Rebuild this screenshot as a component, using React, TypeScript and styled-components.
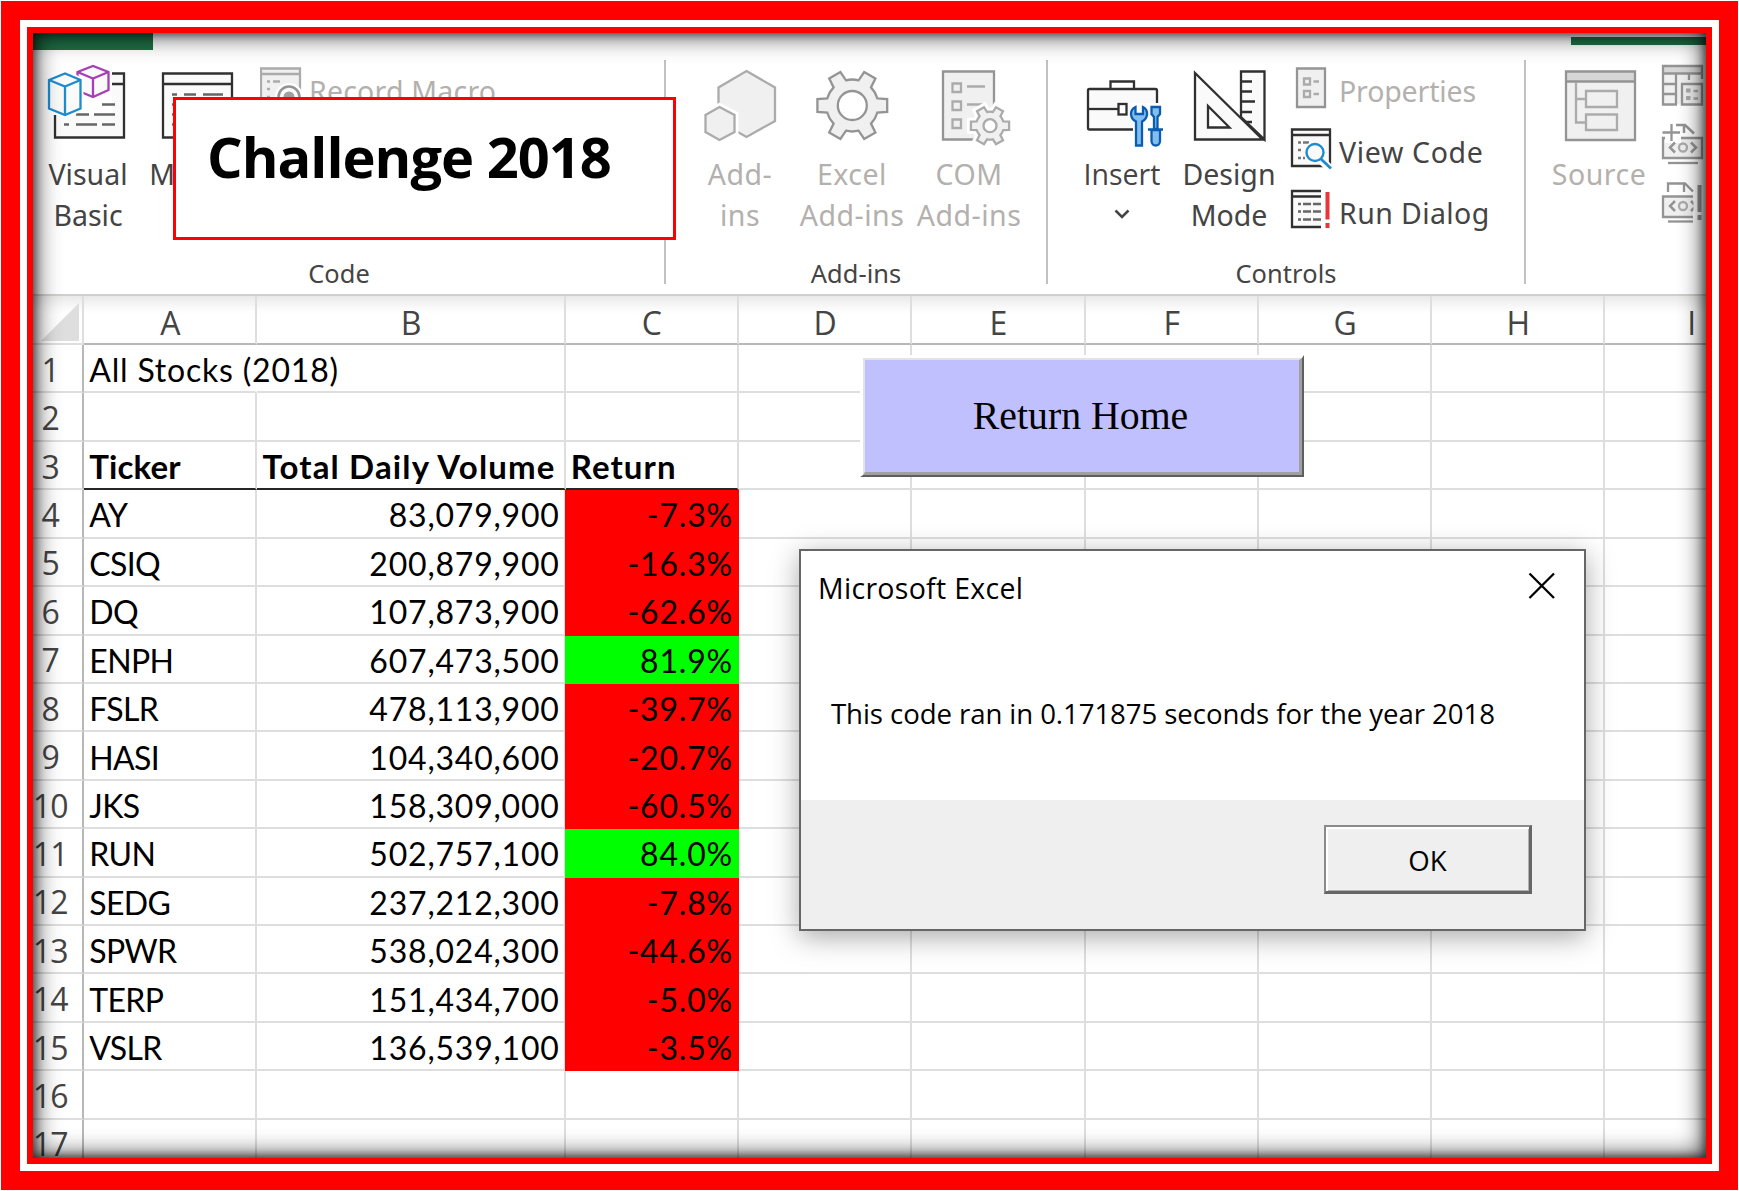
import React from "react";
import styled, { createGlobalStyle, css } from "styled-components";

const Global = createGlobalStyle`
  html, body { margin: 0; background: #fff; overflow: hidden; }
  * { box-sizing: border-box; }
`;

const UI = `"Noto Sans", "Open Sans", sans-serif`;
const OPEN = `"Open Sans", "Noto Sans", sans-serif`;
const CELL = `Lato, "Open Sans", sans-serif`;

/* ---------- picture frame ---------- */
const OuterFrame = styled.div`
  width: 1737px;
  height: 1189px;
  margin: 1px;
  border: 19px solid #ff0000;
  background: #fff;
  padding: 7px;
`;
const InnerFrame = styled.div`
  height: 100%;
  border: 6px solid #ff0000;
`;
const Canvas = styled.main`
  position: relative;
  height: 100%;
  overflow: hidden;
  background: #fff;
`;
const Vignette = styled.div`
  position: absolute;
  inset: 0;
  pointer-events: none;
  box-shadow: inset 0 0 25px 2px rgba(0, 0, 0, 0.78), inset 0 -2px 8px rgba(0, 0, 0, 0.25),
    inset 3px 0 8px rgba(0, 0, 0, 0.2), inset -3px 0 8px rgba(0, 0, 0, 0.25);
`;

/* ---------- ribbon ---------- */
const Ribbon = styled.header`
  position: relative;
  display: flex;
  height: 263px;
  padding-top: 27px;
  border-bottom: 2px solid #d0cfcd;
`;
const GreenStrip = styled.div<{ $left: number; $top: number; $w: number; $h: number }>`
  position: absolute;
  left: ${(p) => p.$left}px;
  top: ${(p) => p.$top}px;
  width: ${(p) => p.$w}px;
  height: ${(p) => p.$h}px;
  background: #1f6e43;
`;
const Group = styled.section<{ $w: number }>`
  width: ${(p) => p.$w}px;
  flex: none;
  display: flex;
  flex-direction: column;
`;
const GroupBody = styled.div<{ $pad: number }>`
  display: flex;
  height: 193px;
  padding-left: ${(p) => p.$pad}px;
`;
const GroupLabel = styled.div<{ $shift?: number }>`
  font: 25.4px/40px ${UI};
  letter-spacing: 0.1px;
  color: #444;
  text-align: center;
  padding-right: ${(p) => p.$shift || 0}px;
`;
const Separator = styled.div`
  width: 2px;
  height: 224px;
  flex: none;
  background: #c3c1be;
`;
const BigButton = styled.div<{ $w: number; $gap?: number; $off?: boolean; $face?: string }>`
  width: ${(p) => p.$w}px;
  margin-left: ${(p) => p.$gap || 0}px;
  flex: none;
  display: flex;
  flex-direction: column;
  align-items: center;
  font: 28.5px/41px ${(p) => p.$face || UI};
  letter-spacing: ${(p) => (p.$off ? 0.5 : 0)}px;
  color: ${(p) => (p.$off ? "#b3b0ad" : "#444")};
  white-space: nowrap;
  svg { display: block; margin-bottom: 4px; flex: none; }
`;
const SmallColumn = styled.div<{ $gap: number }>`
  display: flex;
  flex-direction: column;
  margin-left: ${(p) => p.$gap}px;
`;
const SmallRow = styled.div<{ $off?: boolean; $ls?: number; $face?: string }>`
  display: flex;
  align-items: center;
  height: 61px;
  gap: 5px;
  font: 28.5px/41px ${(p) => p.$face || UI};
  letter-spacing: ${(p) => p.$ls || 0}px;
  color: ${(p) => (p.$off ? "#b3b0ad" : "#444")};
  white-space: nowrap;
  svg { display: block; flex: none; }
  span { padding-top: 2px; }
`;

/* ---------- sheet ---------- */
const TRACKS = "51.3px 173.2px 308.2px repeat(7, 173.3px)";
const line = "#dedede";
const HeadRow = styled.div`
  display: grid;
  grid-template-columns: ${TRACKS};
  height: 49px;
  background: linear-gradient(#e9e9e9, #fafafa 12px, #fff 18px);
`;
const HeadCell = styled.div`
  display: flex;
  justify-content: center;
  align-items: center;
  padding: 7px 0 0 1px;
  border-right: 2px solid ${line};
  border-bottom: 2px solid #b8b8b8;
  font: 32px/36px ${OPEN};
  color: #444;
`;
const Corner = styled.div`
  border-right: 2px solid ${line};
  border-bottom: 2px solid ${line};
  display: flex;
  padding: 7px 0 0 8px;
  svg { display: block; }
`;
const Row = styled.div`
  display: grid;
  grid-template-columns: ${TRACKS};
  height: 48.43px;
`;
const RowHead = styled.div`
  display: flex;
  justify-content: center;
  align-items: center;
  padding: 3px 15px 0 0;
  border-right: 2px solid #b8b8b8;
  border-bottom: 2px solid ${line};
  font: 32px/40px ${OPEN};
  letter-spacing: -0.8px;
  color: #444;
`;
const Cell = styled.div<{
  $right?: boolean;
  $bold?: boolean;
  $fill?: string;
  $rule?: boolean;
  $open?: boolean;
  $ls?: number;
}>`
  display: flex;
  align-items: center;
  justify-content: ${(p) => (p.$right ? "flex-end" : "flex-start")};
  padding: 4px 4px 0 5px;
  border-right: 2px solid ${line};
  border-bottom: 2px solid ${line};
  font: 32px/40px ${CELL};
  letter-spacing: ${(p) => p.$ls ?? 0.8}px;
  color: #000;
  white-space: nowrap;
  ${(p) => p.$open && css`border-right-color: transparent;`}
  ${(p) => p.$rule && css`border-bottom-color: #262626;`}
  ${(p) => p.$bold && css`font-weight: 700; font-size: 33px; padding-top: 2px;`}
  ${(p) => p.$fill && css`
    background: ${p.$fill};
    border-color: ${p.$fill};
    margin-left: -1px;
  `}
`;

/* ---------- floating objects ---------- */
const TitleBox = styled.div`
  position: absolute;
  left: 140px;
  top: 64px;
  width: 503px;
  height: 143px;
  border: 3px solid #ff0000;
  background: #fff;
  padding: 18px 0 0 31px;
  font: 700 56px/76px ${OPEN};
  letter-spacing: -1px;
  color: #000;
  white-space: nowrap;
`;
const HomeButton = styled.div`
  position: absolute;
  left: 827px;
  top: 322px;
  width: 444px;
  height: 122px;
  border-style: solid;
  border-width: 3px 2px 2px 3px;
  border-color: #fff #5f5f5f #5f5f5f #fff;
`;
const HomeFace = styled.div`
  height: 100%;
  display: flex;
  align-items: center;
  justify-content: center;
  padding: 0 3px 0 0;
  border-style: solid;
  border-width: 2px 3px 3px 2px;
  border-color: #e3e3e3 #a0a0a0 #a0a0a0 #e3e3e3;
  background: #c0c0ff;
  font: 39.8px/44px "Liberation Serif", serif;
  color: #000;
`;
const Dialog = styled.div`
  position: absolute;
  left: 766px;
  top: 516px;
  width: 787px;
  height: 382px;
  display: flex;
  flex-direction: column;
  border: 2px solid #666;
  background: #fff;
  font-family: ${OPEN};
  color: #000;
  box-shadow: 0 6px 26px rgba(0, 0, 0, 0.34);
`;
const DialogTitle = styled.div`
  display: flex;
  justify-content: space-between;
  padding: 17px 28px 0 17px;
  font-size: 28.5px;
  line-height: 40px;
  letter-spacing: 0.3px;
  svg { display: block; margin-top: 4px; }
`;
const DialogText = styled.div`
  flex: 1;
  padding: 85px 0 0 30px;
  font-size: 27.6px;
  line-height: 40px;
  letter-spacing: -0.08px;
  white-space: nowrap;
`;
const DialogFooter = styled.div`
  height: 129px;
  display: flex;
  justify-content: flex-end;
  padding: 25px 52px 0 0;
  background: #efefef;
`;
const OkButton = styled.div`
  width: 208px;
  height: 69px;
  display: flex;
  align-items: center;
  justify-content: center;
  padding-top: 2px;
  border-style: solid;
  border-width: 2px 3px 3px 2px;
  border-color: #8a8a8a #666 #666 #8a8a8a;
  box-shadow: inset 2px 2px 0 #fff, inset -1px -1px 0 #b0b0b0;
  font-size: 27.6px;
  line-height: 40px;
`;

/* ---------- icons ---------- */
const DARK = "#303030";
const MID = "#949494";
const SOFT = "#ababab";

function gear(cx: number, cy: number, R: number, r: number, tip: number, base: number) {
  const pts: string[] = [];
  const at = (rad: number, deg: number) => {
    const a = (deg * Math.PI) / 180;
    return `${(cx + rad * Math.cos(a)).toFixed(1)} ${(cy + rad * Math.sin(a)).toFixed(1)}`;
  };
  for (let i = 0; i < 6; i++) {
    const a = i * 60;
    pts.push(`${i ? `A${r} ${r} 0 0 1 ` : "M"}${at(r, a - base)}`, `L${at(R, a - tip)}`, `L${at(R, a + tip)}`, `L${at(r, a + base)}`);
  }
  return pts.join(" ") + `A${r} ${r} 0 0 1 ${at(r, -base)}Z`;
}

const Icon = ({ x, w, y = 60, h = 90, children }: { x: number; w: number; y?: number; h?: number; children: React.ReactNode }) => (
  <svg width={w} height={h} viewBox={`${x} ${y} ${w} ${h}`} fill="none" strokeWidth={2.3}>
    {children}
  </svg>
);

const VisualBasicIcon = () => (
  <Icon x={44} w={88}>
    <path d="M55 115V137.500H124V73.500H112V115Z" fill="#fafafa" />
    <path d="M55 115V137.500H124V73.500H112M112 84H124" stroke={DARK} />
    <path d="M102 104.500H115M76 114.500H89M94 114.500H115M64 124.500H69M76 124.500H97M102 124.500H115" stroke="#666" />
    <path d="M77.500 72L93 66L108.500 72V90L93 97L81 92V80L77.500 76Z" fill="#fafafa" stroke="#a63fb5" />
    <path d="M77.500 72L93 78.500L108.500 72M93 78.500V97" stroke="#a63fb5" />
    <path d="M49 80L65 73.500L80.500 80V108.500L65 115L49 108.500Z" fill="#fafafa" stroke="#fff" strokeWidth={6} />
    <path d="M49 80L65 73.500L80.500 80V108.500L65 115L49 108.500Z" fill="#fafafa" stroke="#1e8bcd" />
    <path d="M49 80L65 86.500L80.500 80M65 86.500V115" stroke="#1e8bcd" />
  </Icon>
);
const MacrosIcon = () => (
  <Icon x={143} w={110}>
    <path d="M163 73.500H232V137.500H163Z" fill="#fafafa" stroke={DARK} />
    <path d="M163 84H232" stroke={DARK} />
    <path d="M172 94.500H177M184 94.500H196M203 94.500H223M172 104.500H177M172 114.500H177M172 124.500H177" stroke="#666" />
  </Icon>
);
const RecordIcon = () => (
  <Icon x={260} w={44} y={60} h={61}>
    <path d="M261 68.500H300V108H261Z" fill="#f0f0f0" stroke={SOFT} />
    <path d="M261 74H300" stroke={SOFT} />
    <path d="M267 81.500H270M273 81.500H280M267 89H270M267 97H270" stroke={SOFT} />
    <circle cx="289" cy="97" r="14" fill="#fff" />
    <circle cx="289" cy="97" r="10.500" stroke="#949494" strokeWidth={2.500} fill="#fafafa" />
    <circle cx="289" cy="97" r="5.500" fill="#a0a0a0" />
  </Icon>
);
const AddinsIcon = () => (
  <Icon x={700} w={80}>
    <path d="M746.500 71L775 87.500V121L746.500 137L718.500 121V87.500Z" fill="#f0f0f0" stroke={SOFT} />
    <path d="M719.500 107L734.500 115V132L719.500 140L705.500 132V115Z" fill="#fff" stroke="#fff" strokeWidth={8} />
    <path d="M719.500 107L734.500 115V132L719.500 140L705.500 132V115Z" fill="#f0f0f0" stroke={SOFT} />
  </Icon>
);
const ExcelAddinsIcon = () => (
  <Icon x={798} w={108}>
    <path d={gear(852.3, 105.5, 35.5, 26, 10.5, 16)} fill="#f0f0f0" stroke={MID} />
    <circle cx="852.300" cy="105.500" r="14.500" fill="#fff" stroke={MID} />
  </Icon>
);
const ComAddinsIcon = () => (
  <Icon x={915} w={108}>
    <path d="M943 71.500H994V139.500H943Z" fill="#f0f0f0" stroke={MID} />
    <path d="M952.500 83.500H961V92H952.500ZM952.500 101.500H961V110H952.500ZM952.500 119.500H961V128H952.500ZM967 86.500H985M967 104.500H985" stroke={SOFT} />
    <path d={gear(990, 125.7, 19.5, 14, 12, 18)} stroke="#fff" fill="#fff" strokeWidth={8} />
    <path d={gear(990, 125.7, 19.5, 14, 12, 18)} stroke={SOFT} fill="#f0f0f0" />
    <circle cx="990" cy="125.700" r="6.500" fill="#fff" stroke={SOFT} />
  </Icon>
);
const InsertIcon = () => (
  <Icon x={1080} w={84}>
    <path d="M1110.500 89V81.500H1134V89" stroke={DARK} />
    <rect x="1088" y="89" width="69" height="40.500" rx="1.500" fill="#fafafa" stroke={DARK} />
    <path d="M1088 109H1118" stroke={DARK} />
    <rect x="1118.500" y="104" width="8" height="10.500" fill="#fff" stroke={DARK} />
    <path d="M1130 103H1165V150H1133V122Z" fill="#fff" />
    <path d="M1135.500 107C1129 110 1130 119 1136 121.500V145.500H1142V121.500C1148 119 1149 110 1143 107V114H1135.500Z" fill="#83beec" stroke="#0a5cb0" />
    <path d="M1151.500 107H1160V114L1157.500 117V129H1154V117L1151.500 114ZM1151.500 130H1160V141C1160 147 1151.500 147 1151.500 141ZM1148 129.500H1163" fill="#83beec" stroke="#0a5cb0" />
  </Icon>
);
const DesignIcon = () => (
  <Icon x={1181} w={96}>
    <path d="M1241 71.500H1264.500V139.500L1241 117Z" fill="#fafafa" stroke={DARK} />
    <path d="M1241 81.500H1252M1241 91.500H1252M1241 101.500H1255M1241 112H1252M1246 122H1252" stroke={DARK} />
    <path d="M1195 73V139.500H1262.500Z" fill="#fafafa" stroke={DARK} />
    <path d="M1208 106V127.500H1229.500Z" fill="#fff" stroke={DARK} />
  </Icon>
);
const PropertiesIcon = () => (
  <Icon x={1290} w={44} y={60} h={61}>
    <path d="M1297 68.500H1325V107H1297Z" fill="#f0f0f0" stroke={MID} />
    <path d="M1304 78.500H1310V84.500H1304ZM1304 91H1310V97H1304ZM1313.500 81.500H1319M1313.500 94H1319" stroke={SOFT} />
  </Icon>
);
const ViewCodeIcon = () => (
  <Icon x={1290} w={44} y={121} h={61}>
    <path d="M1292 129.500H1330V166H1292Z" fill="#fafafa" stroke={DARK} />
    <path d="M1292 135H1330" stroke={DARK} />
    <path d="M1298 142.500H1301M1303 142.500H1309M1298 150H1301M1298 158H1301M1303 158H1305" stroke="#777" />
    <path d="M1322 161L1335 173" stroke="#fff" strokeWidth={8} />
    <circle cx="1315" cy="152.500" r="11" fill="#fafafa" />
    <circle cx="1315" cy="152.500" r="8.500" fill="#fafafa" stroke="#1e8bcd" strokeWidth={2.400} />
    <path d="M1321 159L1331 168.500" stroke="#1e8bcd" strokeWidth={2.800} />
  </Icon>
);
const RunDialogIcon = () => (
  <Icon x={1290} w={44} y={182} h={61}>
    <path d="M1292 191H1321V227H1292Z" fill="#fafafa" />
    <path d="M1321 191H1292V227H1321M1292 196.500H1321" stroke={DARK} />
    <path d="M1298 204H1301M1303 204H1311M1313 204H1321M1298 211.500H1301M1303 211.500H1311M1313 211.500H1321M1298 219.500H1301M1303 219.500H1311M1313 219.500H1321" stroke="#666" />
    <path d="M1327.500 192V219.500M1327.500 223V228" stroke="#e8343a" strokeWidth={4} />
  </Icon>
);
const SourceIcon = () => (
  <Icon x={1549} w={100}>
    <path d="M1566 71.500H1635V140H1566Z" fill="#f0f0f0" />
    <path d="M1566 71.500H1635V81H1566Z" fill="#d6d6d6" />
    <path d="M1566 71.500H1635V140H1566ZM1566 81.500H1635" stroke={MID} />
    <path d="M1576 82V122.500H1586M1576 99H1586M1586 91H1617V107H1586ZM1586 114.500H1617V130H1586Z" stroke={SOFT} />
  </Icon>
);
const MapPropertiesIcon = () => (
  <Icon x={1660} w={46} y={60} h={58}>
    <path d="M1662 66H1701V104.500H1662Z" fill="#f0f0f0" />
    <path d="M1662 66H1701V73.500H1662Z" fill="#d6d6d6" />
    <path d="M1701 79V66H1662V104.500H1676M1662 73.500H1701" stroke={MID} />
    <path d="M1675 74V104M1688 74V80M1662 84H1675M1662 94H1675" stroke={MID} />
    <path d="M1681 84H1701V104.500H1681Z" fill="#f0f0f0" stroke={MID} />
    <path d="M1685 90.500H1689.500M1685 98H1689.500" stroke={SOFT} strokeWidth={4} />
    <path d="M1692.500 91H1697M1692.500 98.500H1697" stroke={SOFT} />
  </Icon>
);
const Chevrons = ({ y }: { y: number }) => (
  <>
    <path d={`M1674 ${y - 5}L1669 ${y}L1674 ${y + 5}M1690 ${y - 5}L1695 ${y}L1690 ${y + 5}`} stroke={MID} strokeWidth={2.5} />
    <circle cx="1682" cy={y} r="4" stroke={SOFT} />
  </>
);
const ExpansionIcon = () => (
  <Icon x={1660} w={46} y={118} h={59}>
    <path d="M1662 138H1701V158H1662Z" fill="#f0f0f0" stroke={MID} />
    <path d="M1664 131H1680V143H1664Z" fill="#fff" />
    <path d="M1661.500 132.500H1679M1670.500 124V141" stroke={MID} />
    <path d="M1675 125H1684L1693 133.500M1683 125V133" stroke={MID} strokeWidth={2.500} />
    <Chevrons y={147.5} />
    <path d="M1667 163H1697" stroke={MID} />
  </Icon>
);
const RefreshIcon = () => (
  <Icon x={1660} w={46} y={177} h={59}>
    <path d="M1662 196.500H1692V217H1662Z" fill="#f0f0f0" />
    <path d="M1692 196.500H1662V217H1692M1667 192V183.500H1684L1692 191.500M1683 184V192" stroke={MID} />
    <Chevrons y={206} />
    <path d="M1694.500 198V216" stroke="#fff" strokeWidth={4} />
    <path d="M1667 221.500H1692" stroke={MID} />
    <path d="M1698.500 185V212M1698.500 215V220" stroke={MID} strokeWidth={4} />
  </Icon>
);

/* ---------- data ---------- */
const COLUMNS = ["A", "B", "C", "D", "E", "F", "G", "H", "I"];
const STOCKS: [string, string, string][] = [
  ["AY", "83,079,900", "-7.3%"],
  ["CSIQ", "200,879,900", "-16.3%"],
  ["DQ", "107,873,900", "-62.6%"],
  ["ENPH", "607,473,500", "81.9%"],
  ["FSLR", "478,113,900", "-39.7%"],
  ["HASI", "104,340,600", "-20.7%"],
  ["JKS", "158,309,000", "-60.5%"],
  ["RUN", "502,757,100", "84.0%"],
  ["SEDG", "237,212,300", "-7.8%"],
  ["SPWR", "538,024,300", "-44.6%"],
  ["TERP", "151,434,700", "-5.0%"],
  ["VSLR", "136,539,100", "-3.5%"],
];

const Blank = ({ n }: { n: number }) => (
  <>{Array.from({ length: n }, (_, i) => <Cell key={i} />)}</>
);

function Sheet() {
  return (
    <section>
      <HeadRow>
        <Corner>
          <svg width="38" height="38"><path d="M38 0V38H0Z" fill="#dedede" /></svg>
        </Corner>
        {COLUMNS.map((c) => <HeadCell key={c}>{c}</HeadCell>)}
      </HeadRow>
      <Row>
        <RowHead>1</RowHead>
        <Cell $open>All Stocks (2018)</Cell>
        <Blank n={8} />
      </Row>
      <Row><RowHead>2</RowHead><Blank n={9} /></Row>
      <Row>
        <RowHead>3</RowHead>
        <Cell $bold $rule $ls={0.1}>Ticker</Cell>
        <Cell $bold $rule $ls={1.15}>Total Daily Volume</Cell>
        <Cell $bold $rule $ls={1.1}>Return</Cell>
        <Blank n={6} />
      </Row>
      {STOCKS.map(([ticker, volume, change], i) => (
        <Row key={ticker}>
          <RowHead>{i + 4}</RowHead>
          <Cell $ls={-0.65}>{ticker}</Cell>
          <Cell $right>{volume}</Cell>
          <Cell $right $fill={change.startsWith("-") ? "#ff0000" : "#00ff00"}>{change}</Cell>
          <Blank n={6} />
        </Row>
      ))}
      <Row><RowHead>16</RowHead><Blank n={9} /></Row>
      <Row><RowHead>17</RowHead><Blank n={9} /></Row>
    </section>
  );
}

export default function App() {
  return (
    <>
      <Global />
      <OuterFrame>
        <InnerFrame>
          <Canvas>
            <Ribbon>
              <GreenStrip $left={0} $top={0} $w={120} $h={17} />
              <GreenStrip $left={1538} $top={4} $w={135} $h={8} />
              <Group $w={631}>
                <GroupBody $pad={11}>
                  <BigButton $w={88}><VisualBasicIcon /><span>Visual</span><span>Basic</span></BigButton>
                  <BigButton $w={110} $gap={11}><MacrosIcon /><span>Macros</span></BigButton>
                  <SmallColumn $gap={7}>
                    <SmallRow $off $ls={0.2}><RecordIcon /><span>Record Macro</span></SmallRow>
                  </SmallColumn>
                </GroupBody>
                <GroupLabel $shift={19}>Code</GroupLabel>
              </Group>
              <Separator />
              <Group $w={380}>
                <GroupBody $pad={34}>
                  <BigButton $w={80} $off><AddinsIcon /><span>Add-</span><span>ins</span></BigButton>
                  <BigButton $w={108} $gap={18} $off><ExcelAddinsIcon /><span>Excel</span><span>Add-ins</span></BigButton>
                  <BigButton $w={108} $gap={9} $off><ComAddinsIcon /><span>COM</span><span>Add-ins</span></BigButton>
                </GroupBody>
                <GroupLabel>Add-ins</GroupLabel>
              </Group>
              <Separator />
              <Group $w={476}>
                <GroupBody $pad={32}>
                  <BigButton $w={84} $face={OPEN}>
                    <InsertIcon />
                    <span>Insert</span>
                    <svg width="16" height="30" fill="none"><path d="M1.500 15.500L8 22L14.500 15.500" stroke="#444" strokeWidth="2.500" /></svg>
                  </BigButton>
                  <BigButton $w={96} $gap={17}><DesignIcon /><span>Design</span><span>Mode</span></BigButton>
                  <SmallColumn $gap={13}>
                    <SmallRow $off $ls={-0.15}><PropertiesIcon /><span>Properties</span></SmallRow>
                    <SmallRow $ls={0.65}><ViewCodeIcon /><span>View Code</span></SmallRow>
                    <SmallRow $ls={0.4}><RunDialogIcon /><span>Run Dialog</span></SmallRow>
                  </SmallColumn>
                </GroupBody>
                <GroupLabel>Controls</GroupLabel>
              </Group>
              <Separator />
              <Group $w={180}>
                <GroupBody $pad={23}>
                  <BigButton $w={100} $off><SourceIcon /><span>Source</span></BigButton>
                  <SmallColumn $gap={12}>
                    <MapPropertiesIcon />
                    <ExpansionIcon />
                    <RefreshIcon />
                  </SmallColumn>
                </GroupBody>
              </Group>
            </Ribbon>
            <Sheet />
            <HomeButton><HomeFace>Return Home</HomeFace></HomeButton>
            <Dialog>
              <DialogTitle>
                Microsoft Excel
                <svg width="28" height="28" fill="none"><path d="M1.500 1.500L26 26M26 1.500L1.500 26" stroke="#000" strokeWidth="2.300" /></svg>
              </DialogTitle>
              <DialogText>This code ran in 0.171875 seconds for the year 2018</DialogText>
              <DialogFooter><OkButton>OK</OkButton></DialogFooter>
            </Dialog>
            <Vignette />
            <TitleBox>Challenge 2018</TitleBox>
          </Canvas>
        </InnerFrame>
      </OuterFrame>
    </>
  );
}
